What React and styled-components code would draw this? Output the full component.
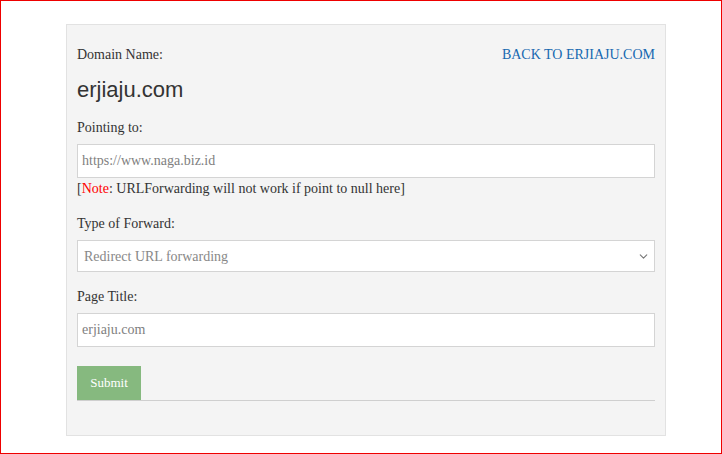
import React from "react";
import styled, { createGlobalStyle } from "styled-components";
import { ChevronDown } from "lucide-react";

const GlobalStyle = createGlobalStyle`
  body {
    margin: 0;
    font-family: "Liberation Serif", "Times New Roman", serif;
    color: #333;
  }
  * {
    box-sizing: border-box;
  }
`;

const Page = styled.div`
  height: 454px;
  border: 1px solid #e00;
  padding: 23px 0 0 65px;
`;

const Panel = styled.div`
  width: 600px;
  height: 412px;
  background: #f4f4f4;
  border: 1px solid #e2e2e2;
  padding: 20px 10px 34px;
`;

const Header = styled.div`
  display: flex;
  justify-content: space-between;
  align-items: center;
  font-size: 14px;
  line-height: 20px;
`;

const BackLink = styled.a`
  color: #1668b0;
  text-decoration: none;
  font-size: 14px;
`;

const DomainTitle = styled.h2`
  margin: 13px 0 0;
  font-family: "Liberation Sans", Arial, sans-serif;
  font-weight: normal;
  font-size: 22px;
  line-height: 24px;
  color: #333;
`;

const Field = styled.div`
  margin-top: ${(p) => p.$top || 15}px;
`;

const Label = styled.label`
  display: block;
  font-size: 14px;
  line-height: 20px;
  margin-bottom: 6px;
`;

const TextInput = styled.input`
  display: block;
  width: 100%;
  height: ${(p) => p.$h || 34}px;
  border: 1px solid #d4d4d4;
  background: #fff;
  padding: 0 4px;
  font-family: "Liberation Serif", "Times New Roman", serif;
  font-size: 14px;
  color: #333;
  outline: none;
  &::placeholder {
    color: #808080;
  }
`;

const SelectWrap = styled.div`
  position: relative;
`;

const Select = styled.select`
  display: block;
  width: 100%;
  height: 32px;
  border: 1px solid #d4d4d4;
  background: #fff;
  padding: 0 6px;
  appearance: none;
  font-family: "Liberation Serif", "Times New Roman", serif;
  font-size: 14px;
  color: #888;
  outline: none;
`;

const Arrow = styled(ChevronDown)`
  position: absolute;
  right: 5px;
  top: 10px;
  color: #777;
  pointer-events: none;
`;

const Note = styled.div`
  font-size: 14px;
  line-height: 20px;
  margin-top: 1px;
`;

const Red = styled.span`
  color: #f00;
`;

const Actions = styled.div`
  margin-top: 19px;
  border-bottom: 1px solid #cfcfcf;
`;

const SubmitButton = styled.button`
  display: block;
  width: 64px;
  height: 34px;
  border: none;
  background: #86b97f;
  color: #fff;
  font-family: "Liberation Serif", "Times New Roman", serif;
  font-size: 13px;
  cursor: pointer;
`;

export default function App() {
  return (
    <>
      <GlobalStyle />
      <Page>
        <Panel>
          <Header>
            <span>Domain Name:</span>
            <BackLink href="#">BACK TO ERJIAJU.COM</BackLink>
          </Header>
          <DomainTitle>erjiaju.com</DomainTitle>
          <Field $top={16}>
            <Label>Pointing to:</Label>
            <TextInput placeholder="https://www.naga.biz.id" />
            <Note>
              [<Red>Note</Red>: URLForwarding will not work if point to null here]
            </Note>
          </Field>
          <Field>
            <Label>Type of Forward:</Label>
            <SelectWrap>
              <Select defaultValue="redirect">
                <option value="redirect">Redirect URL forwarding</option>
                <option value="frame">Frame URL forwarding</option>
              </Select>
              <Arrow size={13} strokeWidth={2} />
            </SelectWrap>
          </Field>
          <Field>
            <Label>Page Title:</Label>
            <TextInput placeholder="erjiaju.com" />
          </Field>
          <Actions>
            <SubmitButton type="button">Submit</SubmitButton>
          </Actions>
        </Panel>
      </Page>
    </>
  );
}
